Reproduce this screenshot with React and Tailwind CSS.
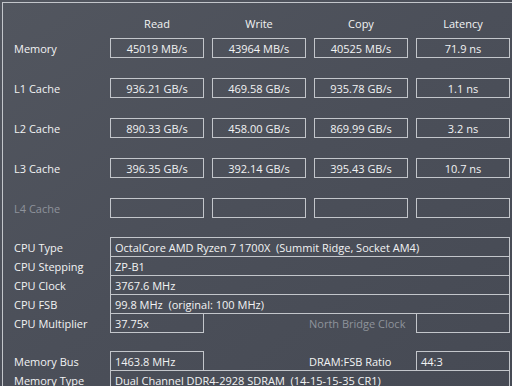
import React from 'react';

const benchRows = [
  { label: 'Memory', values: ['45019 MB/s', '43964 MB/s', '40525 MB/s', '71.9 ns'] },
  { label: 'L1 Cache', values: ['936.21 GB/s', '469.58 GB/s', '935.78 GB/s', '1.1 ns'] },
  { label: 'L2 Cache', values: ['890.33 GB/s', '458.00 GB/s', '869.99 GB/s', '3.2 ns'] },
  { label: 'L3 Cache', values: ['396.35 GB/s', '392.14 GB/s', '395.43 GB/s', '10.7 ns'] },
  { label: 'L4 Cache', values: ['', '', '', ''], disabled: true },
];

const cpuRows = [
  { label: 'CPU Type', value: 'OctalCore AMD Ryzen 7 1700X\u00a0 (Summit Ridge, Socket AM4)' },
  { label: 'CPU Stepping', value: 'ZP-B1' },
  { label: 'CPU Clock', value: '3767.6 MHz' },
  { label: 'CPU FSB', value: '99.8 MHz\u00a0 (original: 100 MHz)' },
];

const memType = 'Dual Channel DDR4-2928 SDRAM\u00a0 (14-15-15-35 CR1)';

const Box = ({ children, className = '' }) => (
  <div className={`h-[20px] border border-[#c3c6cb] flex items-center ${className}`}>
    {children}
  </div>
);

const InfoRow = ({ label, children, first }) => (
  <div className={`flex h-[20px] ${first ? '' : '-mt-px'}`}>
    <div className="w-[96px] flex items-center">{label}</div>
    {children}
  </div>
);

const App = () => {
  return (
    <div className="w-[512px] h-[386px] overflow-hidden bg-linear-to-br from-[#52565f] via-[#4b4f59] to-[#464a54] pt-[2px] pl-[2px] font-['Open_Sans',sans-serif] text-[11px] text-[#f2f3f4] leading-none">
      <div className="w-[520px] h-[400px] border-t border-l border-[#c3c6cb] pt-[10px] pl-[11px]">
        {/* column headers */}
        <div className="flex h-[20px] items-center">
          <div className="w-[96px]" />
          <div className="flex gap-2">
            {['Read', 'Write', 'Copy', 'Latency'].map((h) => (
              <div key={h} className="w-[94px] text-center">{h}</div>
            ))}
          </div>
        </div>

        {/* benchmark results */}
        <div className="mt-[5px] flex flex-col gap-[20px]">
          {benchRows.map((row) => (
            <div key={row.label} className="flex h-[20px]">
              <div className={`w-[96px] flex items-center ${row.disabled ? 'text-[#8e939b]' : ''}`}>
                {row.label}
              </div>
              <div className="flex gap-2">
                {row.values.map((v, i) => (
                  <Box key={i} className="w-[94px] justify-center">{v}</Box>
                ))}
              </div>
            </div>
          ))}
        </div>

        {/* cpu info */}
        <div className="mt-[19px] flex flex-col">
          {cpuRows.map((row, i) => (
            <InfoRow key={row.label} label={row.label} first={i === 0}>
              <Box className="w-[400px] px-[4px]">{row.value}</Box>
            </InfoRow>
          ))}
          <InfoRow label="CPU Multiplier">
            <Box className="w-[94px] px-[4px]">37.75x</Box>
            <div className="w-[212px] pl-[105px] flex items-center text-[#8e939b]">North Bridge Clock</div>
            <Box className="w-[94px] px-[4px]" />
          </InfoRow>
        </div>

        {/* memory info */}
        <div className="mt-[18px] flex flex-col">
          <InfoRow label="Memory Bus" first>
            <Box className="w-[94px] px-[4px]">1463.8 MHz</Box>
            <div className="w-[212px] pl-[105px] flex items-center">DRAM:FSB Ratio</div>
            <Box className="w-[94px] px-[4px]">44:3</Box>
          </InfoRow>
          <InfoRow label="Memory Type">
            <Box className="w-[400px] px-[4px]">{memType}</Box>
          </InfoRow>
        </div>
      </div>
    </div>
  );
};

export default App;
